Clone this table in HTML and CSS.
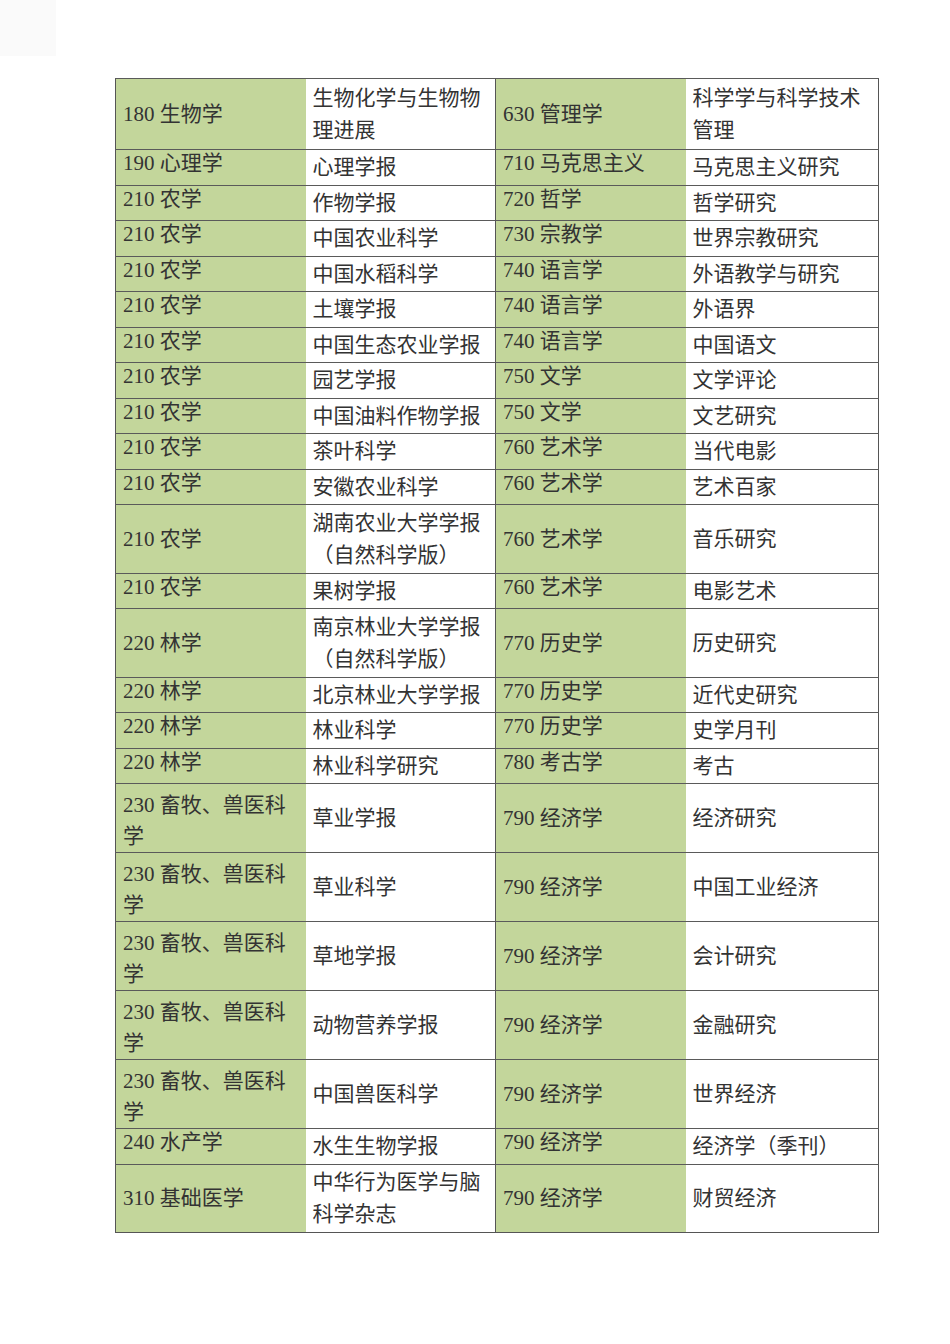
FILE: index.html
```html
<!DOCTYPE html>
<html lang="zh-CN">
<head>
<meta charset="utf-8">
<title>期刊列表</title>
<link rel="stylesheet" href="styles.css">
</head>
<body>
<div class="corner"></div>
<table class="list">
<colgroup><col class="c1"><col class="c2"><col class="c3"><col class="c4"></colgroup>
<tbody>
<tr class="d first"><td class="g">180 生物学</td><td class="w">生物化学与生物物理进展</td><td class="g mid">630 管理学</td><td class="w">科学学与科学技术管理</td></tr>
<tr class="s"><td class="g">190 心理学</td><td class="w">心理学报</td><td class="g mid">710 马克思主义</td><td class="w">马克思主义研究</td></tr>
<tr class="s"><td class="g">210 农学</td><td class="w">作物学报</td><td class="g mid">720 哲学</td><td class="w">哲学研究</td></tr>
<tr class="s"><td class="g">210 农学</td><td class="w">中国农业科学</td><td class="g mid">730 宗教学</td><td class="w">世界宗教研究</td></tr>
<tr class="s"><td class="g">210 农学</td><td class="w">中国水稻科学</td><td class="g mid">740 语言学</td><td class="w">外语教学与研究</td></tr>
<tr class="s"><td class="g">210 农学</td><td class="w">土壤学报</td><td class="g mid">740 语言学</td><td class="w">外语界</td></tr>
<tr class="s"><td class="g">210 农学</td><td class="w">中国生态农业学报</td><td class="g mid">740 语言学</td><td class="w">中国语文</td></tr>
<tr class="s"><td class="g">210 农学</td><td class="w">园艺学报</td><td class="g mid">750 文学</td><td class="w">文学评论</td></tr>
<tr class="s"><td class="g">210 农学</td><td class="w">中国油料作物学报</td><td class="g mid">750 文学</td><td class="w">文艺研究</td></tr>
<tr class="s"><td class="g">210 农学</td><td class="w">茶叶科学</td><td class="g mid">760 艺术学</td><td class="w">当代电影</td></tr>
<tr class="s"><td class="g">210 农学</td><td class="w">安徽农业科学</td><td class="g mid">760 艺术学</td><td class="w">艺术百家</td></tr>
<tr class="d"><td class="g">210 农学</td><td class="w">湖南农业大学学报（自然科学版）</td><td class="g mid">760 艺术学</td><td class="w">音乐研究</td></tr>
<tr class="s"><td class="g">210 农学</td><td class="w">果树学报</td><td class="g mid">760 艺术学</td><td class="w">电影艺术</td></tr>
<tr class="d"><td class="g">220 林学</td><td class="w">南京林业大学学报（自然科学版）</td><td class="g mid">770 历史学</td><td class="w">历史研究</td></tr>
<tr class="s"><td class="g">220 林学</td><td class="w">北京林业大学学报</td><td class="g mid">770 历史学</td><td class="w">近代史研究</td></tr>
<tr class="s"><td class="g">220 林学</td><td class="w">林业科学</td><td class="g mid">770 历史学</td><td class="w">史学月刊</td></tr>
<tr class="s"><td class="g">220 林学</td><td class="w">林业科学研究</td><td class="g mid">780 考古学</td><td class="w">考古</td></tr>
<tr class="d"><td class="g two">230 畜牧、兽医科学</td><td class="w">草业学报</td><td class="g mid">790 经济学</td><td class="w">经济研究</td></tr>
<tr class="d"><td class="g two">230 畜牧、兽医科学</td><td class="w">草业科学</td><td class="g mid">790 经济学</td><td class="w">中国工业经济</td></tr>
<tr class="d"><td class="g two">230 畜牧、兽医科学</td><td class="w">草地学报</td><td class="g mid">790 经济学</td><td class="w">会计研究</td></tr>
<tr class="d"><td class="g two">230 畜牧、兽医科学</td><td class="w">动物营养学报</td><td class="g mid">790 经济学</td><td class="w">金融研究</td></tr>
<tr class="d"><td class="g two">230 畜牧、兽医科学</td><td class="w">中国兽医科学</td><td class="g mid">790 经济学</td><td class="w">世界经济</td></tr>
<tr class="s"><td class="g">240 水产学</td><td class="w">水生生物学报</td><td class="g mid">790 经济学</td><td class="w">经济学（季刊）</td></tr>
<tr class="d"><td class="g">310 基础医学</td><td class="w">中华行为医学与脑科学杂志</td><td class="g mid">790 经济学</td><td class="w">财贸经济</td></tr>
</tbody>
</table>
</body>
</html>
```

FILE: styles.css
```css
html, body {
  margin: 0;
  padding: 0;
  background: #ffffff;
}

.corner {
  width: 56px;
  height: 56px;
  background: #fafafa;
}

.list {
  margin: 22px 0 0 115px;
  border-collapse: collapse;
  table-layout: fixed;
  width: 763px;
  font-family: "Liberation Serif", "Noto Sans CJK SC", serif;
  font-size: 21px;
  color: #333333;
  border-left: 1px solid #555555;
  border-right: 1px solid #555555;
  border-bottom: 1px solid #555555;
}

.c1 { width: 190px; }
.c2 { width: 190px; }
.c3 { width: 190px; }
.c4 { width: 193px; }

.list td {
  padding: 0 7px;
  border-top: 1px solid #5a5a5a;
  line-height: 32px;
  vertical-align: middle;
  word-break: break-all;
}

.list td.g {
  background: #c3d69b;
}

.list td.w {
  background: #ffffff;
}

.list td.mid {
  border-left: 1px solid #555555;
}

.list tr.s {
  height: 35.5px;
}

.list tr.s td {
  line-height: 28px;
}

.list tr.s td.g {
  vertical-align: top;
  line-height: 26px;
}

.list tr.s td.w {
  vertical-align: top;
  padding-top: 3px;
}

.list tr.d {
  height: 68.6px;
}

.list tr.first {
  height: 71px;
}

.list td.two {
  vertical-align: top;
  line-height: 31px;
  padding-top: 6px;
}
```
